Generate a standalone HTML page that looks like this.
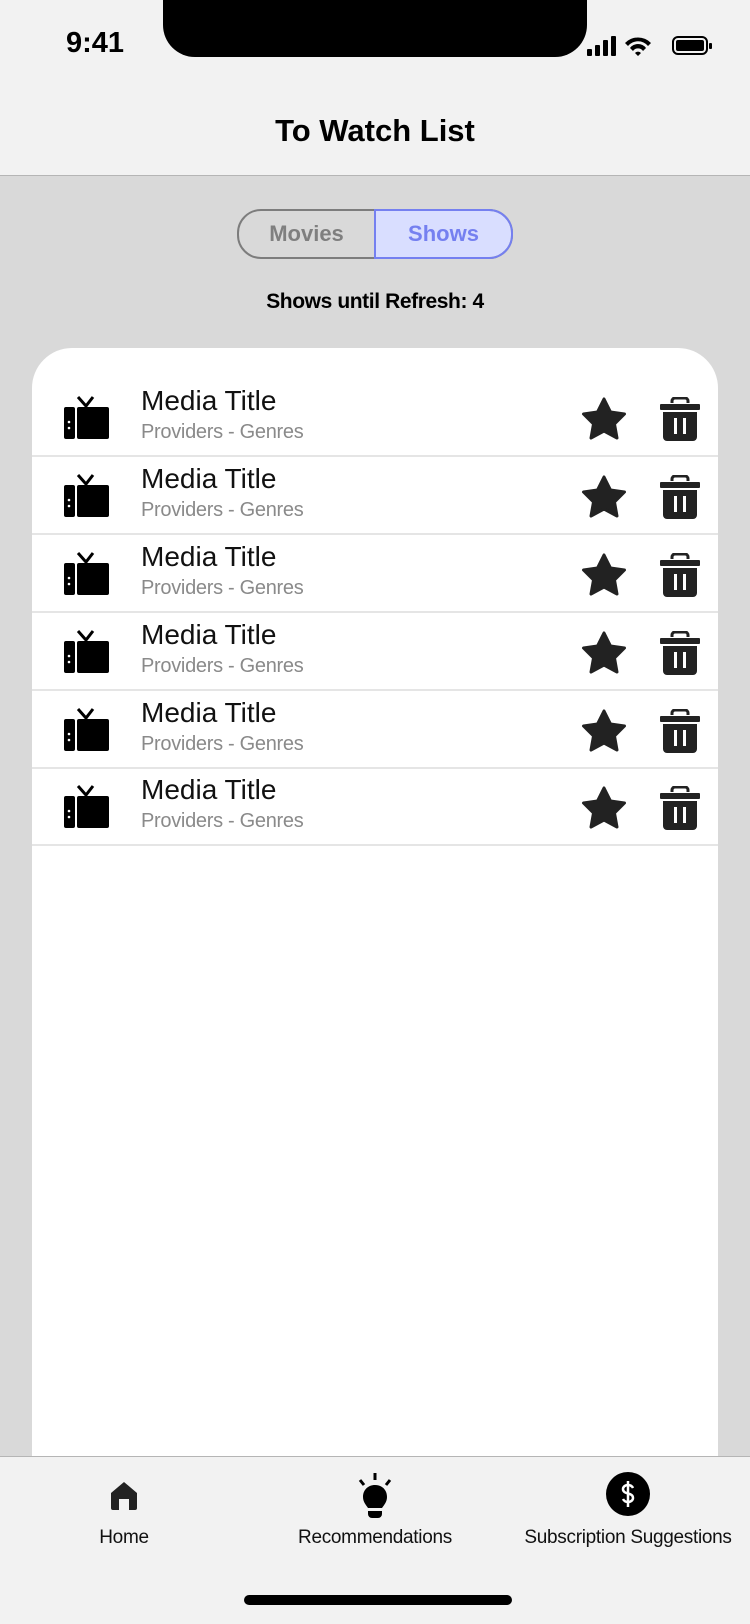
<!DOCTYPE html>
<html><head><meta charset="utf-8"><style>
*{margin:0;padding:0;box-sizing:border-box}
body{width:750px;height:1624px;background:#d9d9d9;font-family:"Liberation Sans",sans-serif;position:relative;overflow:hidden}
.hdr{position:absolute;left:0;top:0;width:750px;height:176px;background:#f2f2f2;border-bottom:1px solid #b5b5b5}
.notch{position:absolute;left:163px;top:0;width:424px;height:57px;background:#000;border-radius:0 0 32px 32px}
.time{position:absolute;left:66px;top:27px;font-size:29px;font-weight:bold;color:#000}
.title{position:absolute;top:113px;width:750px;text-align:center;font-size:31px;font-weight:bold}
.seg{position:absolute;left:237px;top:209px;width:276px;height:50px;border:2px solid #7d7d7d;border-radius:24px;overflow:hidden;display:flex}
.seg div{flex:1;text-align:center;line-height:46px;font-size:22px;font-weight:bold}
.seg .m{color:#7f7f7f;border-right:2px solid #7d7d7d}
.seg .s{background:#d9deff;color:#7580f0}
.segb{position:absolute;left:374px;top:209px;width:139px;height:50px;border:2px solid #7580f0;border-radius:0 24px 24px 0}
.ref{position:absolute;top:290px;width:750px;text-align:center;font-size:21px;font-weight:bold;letter-spacing:-0.4px}
.card{position:absolute;left:32px;top:348px;width:686px;height:1120px;background:#fff;border-radius:40px 40px 0 0}
.row{position:absolute;left:32px;width:686px;height:78px;border-bottom:2px solid #e5e5e5}
.row .t{position:absolute;left:109px;top:6px;font-size:28px;color:#111}
.row .p{position:absolute;left:109px;top:42px;font-size:20px;color:#8a8a8a;letter-spacing:-0.3px}
.row svg{position:absolute}
.tab{position:absolute;left:0;top:1456px;width:750px;height:168px;background:#f2f2f2;border-top:1px solid #b5b5b5}
.lbl{position:absolute;top:1527px;font-size:19px;color:#111;text-align:center;letter-spacing:-0.3px}
.ind{position:absolute;left:244px;top:1595px;width:268px;height:10px;border-radius:5px;background:#000}
</style></head><body>
<div class="hdr"></div>
<div class="notch"></div>
<div class="time">9:41</div>
<svg style="position:absolute;left:585px;top:34px" width="140" height="24" viewBox="0 0 140 24">
<rect x="2" y="15" width="5" height="7" rx="1"/><rect x="10" y="11" width="5" height="11" rx="1"/><rect x="18" y="6" width="5" height="16" rx="1"/><rect x="26" y="2" width="5" height="20" rx="1"/>
<path d="M40 9a18 18 0 0 1 26 0l-3 3a13 13 0 0 0-20 0z M45 14a10 10 0 0 1 16 0l-3 3a6 6 0 0 0-10 0z M50 19l3 3 3-3a4 4 0 0 0-6 0z"/>
<rect x="88" y="3" width="34" height="17" rx="5" fill="none" stroke="#000" stroke-width="2"/><rect x="91" y="6" width="28" height="11" rx="2"/><rect x="124" y="9" width="3" height="6" rx="1"/>
</svg>
<div class="title">To Watch List</div>
<div class="seg"><div class="m">Movies</div><div class="s">Shows</div></div>
<div class="segb"></div>
<div class="ref">Shows until Refresh: 4</div>
<div class="card"></div>

<div id="rows"></div>
<script>
let h='';
const seps=[457,535,613,691,769,846];
seps.forEach(s=>{const top=s-78;
h+=`<div class="row" style="top:${top}px"><div class="t">Media Title</div><div class="p">Providers - Genres</div>
<svg style="left:32px;top:16px" width="46" height="46" viewBox="0 0 46 46"><path d="M14 2l8 9 7-9" stroke="#000" stroke-width="3" fill="none"/><rect x="0" y="12" width="11" height="32" rx="2"/><rect x="13" y="12" width="32" height="32" rx="2"/><circle cx="5" cy="27" r="1.3" fill="#fff"/><circle cx="5" cy="33" r="1.3" fill="#fff"/></svg>
<svg style="left:549px;top:18px" width="46" height="44" viewBox="0 0 46 44"><path d="M23 2l6.5 13 14 2-10 10 2.5 14-13-7-13 7 2.5-14-10-10 14-2z" fill="#222" stroke="#222" stroke-width="3" stroke-linejoin="round"/></svg>
<svg style="left:628px;top:18px" width="40" height="44" viewBox="0 0 40 44"><path d="M12 6v-2a3 3 0 0 1 3-3h10a3 3 0 0 1 3 3v2" stroke="#222" stroke-width="3" fill="none"/><rect x="0" y="7" width="40" height="6" rx="1" fill="#222"/><path d="M3 15h34v25a4 4 0 0 1-4 4h-26a4 4 0 0 1-4-4z" fill="#222"/><rect x="14" y="21" width="3" height="16" fill="#fff"/><rect x="23" y="21" width="3" height="16" fill="#fff"/></svg></div>`;});
document.getElementById('rows').innerHTML=h;
</script>

<div class="tab"></div>
<svg style="position:absolute;left:109px;top:1481px" width="30" height="30" viewBox="0 0 30 30"><path d="M15 1l13 11v15a2 2 0 0 1-2 2h-6v-11h-10v11h-6a2 2 0 0 1-2-2v-15z" fill="#222"/></svg>
<svg style="position:absolute;left:356px;top:1473px" width="38" height="46" viewBox="0 0 38 46"><path d="M19 0v7M4 7l4 5M34 7l-4 5" stroke="#000" stroke-width="3"/><path d="M19 12c7 0 12 5 12 12 0 5-3 8-5 11h-14c-2-3-5-6-5-11 0-7 5-12 12-12z"/><path d="M12 38h14v3a4 4 0 0 1-4 4h-6a4 4 0 0 1-4-4z"/></svg>
<svg style="position:absolute;left:606px;top:1472px" width="44" height="44" viewBox="0 0 44 44"><circle cx="22" cy="22" r="22"/><path d="M22 9v26M27 16c-1-2-3-3-5-3-3 0-5 2-5 4 0 6 10 3 10 9 0 2-2 4-5 4-2 0-4-1-5-3" stroke="#fff" stroke-width="2.5" fill="none"/></svg>
<div class="lbl" style="left:74px;width:100px">Home</div>
<div class="lbl" style="left:275px;width:200px">Recommendations</div>
<div class="lbl" style="left:510px;width:236px">Subscription Suggestions</div>
<div class="ind"></div>
</body></html>
